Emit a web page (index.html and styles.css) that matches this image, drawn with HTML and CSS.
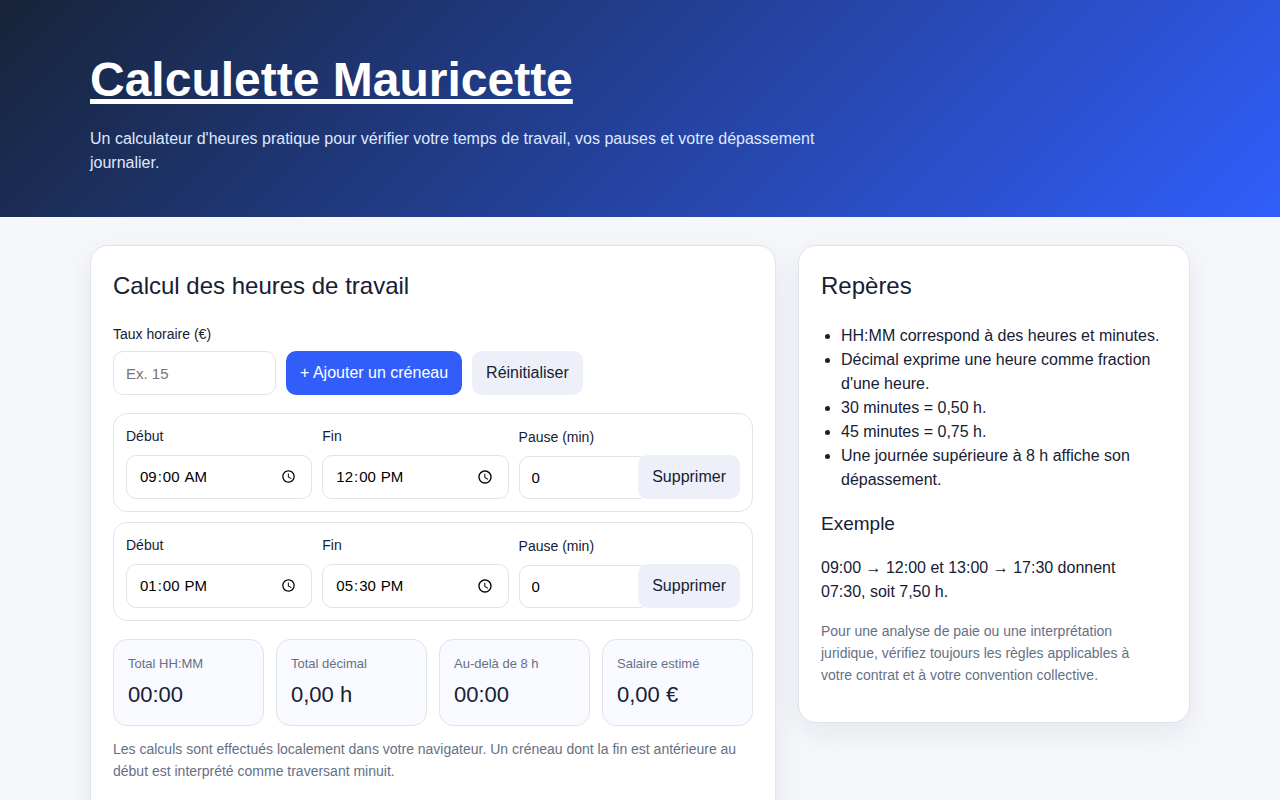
FILE: index.html
```html
<!doctype html>
<html lang="fr">
  <head>
    <meta charset="utf-8">
    <meta name="viewport" content="width=device-width, initial-scale=1">
    <title>Calculette Mauricette</title>
    <link rel="stylesheet" href="styles.css">
  </head>
  <body>
    <header class="hero">
      <div class="wrap">
        <h1><a href="#">Calculette Mauricette</a></h1>
        <p>Un calculateur d'heures pratique pour vérifier votre temps de travail, vos pauses et votre dépassement journalier.</p>
      </div>
    </header>
    <main class="wrap layout">
      <section class="card">
        <h2>Calcul des heures de travail</h2>
        <div class="toolbar">
          <div class="field">
            <label for="rate">Taux horaire (€)</label>
            <input class="rate" id="rate" type="number" min="0" placeholder="Ex. 15">
          </div>
          <button class="primary" type="button">+ Ajouter un créneau</button>
          <button type="button">Réinitialiser</button>
        </div>
        <div class="slots">
          <div class="slot">
            <div class="field">
              <label for="start1">Début</label>
              <input id="start1" type="time" value="09:00">
            </div>
            <div class="field">
              <label for="end1">Fin</label>
              <input id="end1" type="time" value="12:00">
            </div>
            <div class="field pause">
              <label for="pause1">Pause (min)</label>
              <input id="pause1" type="number" min="0" value="0">
            </div>
            <button type="button">Supprimer</button>
          </div>
          <div class="slot">
            <div class="field">
              <label for="start2">Début</label>
              <input id="start2" type="time" value="13:00">
            </div>
            <div class="field">
              <label for="end2">Fin</label>
              <input id="end2" type="time" value="17:30">
            </div>
            <div class="field pause">
              <label for="pause2">Pause (min)</label>
              <input id="pause2" type="number" min="0" value="0">
            </div>
            <button type="button">Supprimer</button>
          </div>
        </div>
        <div class="results">
          <div class="result"><span>Total HH:MM</span><strong>00:00</strong></div>
          <div class="result"><span>Total décimal</span><strong>0,00 h</strong></div>
          <div class="result"><span>Au-delà de 8 h</span><strong>00:00</strong></div>
          <div class="result"><span>Salaire estimé</span><strong>0,00 €</strong></div>
        </div>
        <p class="note">Les calculs sont effectués localement dans votre navigateur. Un créneau dont la fin est antérieure au début est interprété comme traversant minuit.</p>
      </section>
      <aside class="card tips">
        <h2>Repères</h2>
        <ul>
          <li>HH:MM correspond à des heures et minutes.</li>
          <li>Décimal exprime une heure comme fraction d'une heure.</li>
          <li>30 minutes = 0,50 h.</li>
          <li>45 minutes = 0,75 h.</li>
          <li>Une journée supérieure à 8 h affiche son dépassement.</li>
        </ul>
        <h3>Exemple</h3>
        <p>09:00 → 12:00 et 13:00 → 17:30 donnent 07:30, soit 7,50 h.</p>
        <p class="note">Pour une analyse de paie ou une interprétation juridique, vérifiez toujours les règles applicables à votre contrat et à votre convention collective.</p>
      </aside>
    </main>
  </body>
</html>
```
FILE: styles.css
```css
:root {
  --bg: #f5f7fb;
  --ink: #172033;
  --muted: #667085;
  --line: #dfe3ea;
  --blue: #315efb;
}

* {
  box-sizing: border-box;
}

body {
  margin: 0;
  background: var(--bg);
  color: var(--ink);
  font: 16px/24px "Liberation Sans", Arial, sans-serif;
}

.wrap {
  width: min(1100px, 100% - 32px);
  margin: 0 auto;
}

.hero {
  padding: 52px 0 42px;
  background: linear-gradient(135deg, #172438, #315efb);
  color: #fff;
}

.hero h1 {
  margin: 0 0 20px;
  font-size: 48px;
  line-height: 55px;
}

.hero a {
  color: inherit;
  text-decoration-thickness: 5px;
}

.hero p {
  max-width: 760px;
  margin: 0;
  color: #dfe8ff;
}

.layout {
  display: grid;
  grid-template-columns: 1.75fr 1fr;
  gap: 22px;
  align-items: start;
  padding: 28px 0;
}

.card {
  padding: 22px;
  background: #fff;
  border: 1px solid var(--line);
  border-radius: 18px;
  box-shadow: 0 10px 30px rgba(23, 32, 51, .07);
}

h2,
h3 {
  font-weight: 400;
}

h2 {
  margin: 0 0 20px;
  font-size: 24px;
  line-height: 36px;
}

h3 {
  margin: 18px 0;
  font-size: 19px;
  line-height: 28px;
}

.toolbar {
  display: flex;
  flex-wrap: wrap;
  align-items: end;
  gap: 10px;
}

label {
  display: block;
  margin-bottom: 6px;
  font-size: 14px;
  line-height: 21px;
}

input,
button {
  height: 44px;
  border-radius: 10px;
  font: inherit;
}

input {
  width: 100%;
  padding: 10px 12px;
  background: #fff;
  border: 1px solid var(--line);
  font-size: 15px;
}

.rate {
  width: 163px;
}

button {
  padding: 10px 14px;
  border: 0;
  background: #edf0f8;
  color: var(--ink);
}

.primary {
  background: var(--blue);
  color: #fff;
}

.slots {
  display: grid;
  gap: 10px;
  margin: 18px 0;
}

.slot {
  display: grid;
  grid-template-columns: 1.7fr 1.7fr minmax(0, 1fr) auto;
  gap: 10px;
  align-items: end;
  padding: 12px;
  border: 1px solid var(--line);
  border-radius: 14px;
}

.slot label {
  margin-bottom: 8px;
}

/* the number box runs under the delete button */
.pause input {
  width: 130px;
  height: 43px;
}

.slot button {
  position: relative;
}

.results {
  display: grid;
  grid-template-columns: repeat(4, 1fr);
  gap: 12px;
}

.result {
  padding: 12px 14px 14px;
  background: #f8faff;
  border: 1px solid var(--line);
  border-radius: 14px;
}

.result span {
  display: block;
  color: var(--muted);
  font-size: 13px;
}

.result strong {
  display: block;
  margin-top: 2px;
  font-size: 22px;
  font-weight: 400;
  line-height: 33px;
}

ul {
  margin: 0;
  padding-left: 20px;
}

.card p {
  margin: 0 0 16px;
}

.tips p {
  max-width: 330px;
}

.card .note {
  margin: 12px 0 14px;
  color: var(--muted);
  font-size: 14px;
  line-height: 22px;
}
```
